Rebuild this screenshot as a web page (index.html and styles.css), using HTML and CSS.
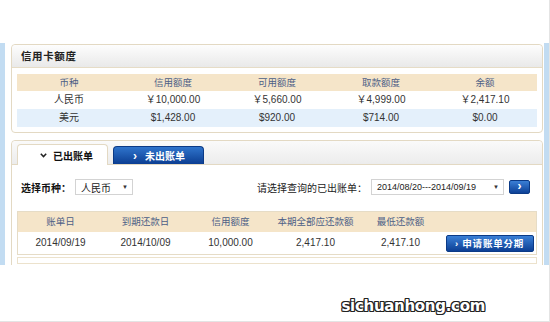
FILE: index.html
```html
<!DOCTYPE html>
<html>
<head>
<meta charset="utf-8">
<link rel="stylesheet" href="styles.css">
</head>
<body>
<div class="page">
  <div class="frame">
    <div class="card card-limit">
      <div class="card-title">信用卡额度</div>
      <div class="card-body">
        <div class="grid5 head">
          <div>币种</div><div>信用额度</div><div>可用额度</div><div>取款额度</div><div>余额</div>
        </div>
        <div class="grid5 row">
          <div>人民币</div><div>￥10,000.00</div><div>￥5,660.00</div><div>￥4,999.00</div><div>￥2,417.10</div>
        </div>
        <div class="grid5 row alt">
          <div>美元</div><div>$1,428.00</div><div>$920.00</div><div>$714.00</div><div>$0.00</div>
        </div>
      </div>
    </div>

    <div class="card card-bill">
      <div class="tabs">
        <div class="tab active"><span class="chev-down"><svg width="7" height="5" viewBox="0 0 7 5"><path d="M0.8 0.8 L3.5 3.6 L6.2 0.8" fill="none" stroke="#222" stroke-width="1.5"/></svg></span>已出账单</div>
        <div class="tab inactive"><span class="chev-right">›</span>未出账单</div>
      </div>
      <div class="bill-body">
        <div class="form-row">
          <div class="left-form">
            <span class="lbl">选择币种：</span>
            <div class="select sel-cur"><span>人民币</span><span class="arrow">▼</span></div>
          </div>
          <div class="right-form">
            <span class="lbl2">请选择查询的已出账单：</span>
            <div class="select sel-date"><span>2014/08/20---2014/09/19</span><span class="arrow">▼</span></div>
            <div class="go">›</div>
          </div>
        </div>
        <div class="bill-table">
          <div class="grid6 bhead">
            <div>账单日</div><div>到期还款日</div><div>信用额度</div><div>本期全部应还款额</div><div>最低还款额</div><div></div>
          </div>
          <div class="grid6 brow">
            <div>2014/09/19</div><div>2014/10/09</div><div>10,000.00</div><div>2,417.10</div><div>2,417.10</div>
            <div><span class="apply">› 申请账单分期</span></div>
          </div>
        </div>
        <div class="next-box"></div>
      </div>
    </div>
  </div>
  <div class="watermark">sichuanhong.com</div>
</div>
</body>
</html>
```

FILE: styles.css
```css
html, body {
  margin: 0;
  padding: 0;
  background: #fff;
}
.page {
  width: 550px;
  height: 322px;
  box-sizing: border-box;
  border-right: 1px solid #e4e4e4;
  border-bottom: 1px solid #e4e4e4;
  overflow: hidden;
  font-family: "Liberation Sans", "Noto Sans CJK SC", sans-serif;
  font-size: 10px;
  color: #333;
}
.frame {
  margin-top: 43px;
  height: 222px;
  box-sizing: border-box;
  border-left: 5px solid #c2dcf2;
  border-right: 5px solid #c2dcf2;
  padding: 1px 1px 0 6px;
  overflow: hidden;
}
.card {
  width: 532px;
  box-sizing: border-box;
  border: 1px solid #e3d9c3;
  border-radius: 4px;
  background: #fff;
}
.card-title {
  height: 22px;
  line-height: 22px;
  padding-left: 9px;
  font-weight: bold;
  font-size: 10.5px;
  letter-spacing: 0.6px;
  color: #222;
  background: linear-gradient(#fdfdfd, #e9e9e9);
  border-bottom: 1px solid #e6dcc6;
  border-radius: 4px 4px 0 0;
}
.card-body {
  padding: 6px 5px 5px 5px;
}
.grid5 {
  display: grid;
  grid-template-columns: repeat(5, 1fr);
  text-align: center;
}
.head {
  height: 17px;
  line-height: 17px;
  background: #f5e5c9;
  color: #4d5f86;
  font-size: 9.5px;
}
.row {
  height: 18px;
  line-height: 18px;
  color: #333;
}
.row.alt {
  background: #e4f0fb;
}
.card-bill {
  margin-top: 7px;
  height: 200px;
}
.tabs {
  height: 23px;
  background: linear-gradient(#fafafa, #ececec);
  border-bottom: 1px solid #e3d9c3;
  border-radius: 4px 4px 0 0;
  padding: 3px 0 0 5px;
  box-sizing: content-box;
  display: flex;
  align-items: flex-end;
  gap: 5px;
  height: 20px;
}
.tab {
  box-sizing: border-box;
  width: 91px;
  display: flex;
  align-items: center;
  font-weight: bold;
  font-size: 10px;
  border-radius: 4px 4px 0 0;
}
.tab.active {
  height: 21px;
  margin-bottom: -1px;
  background: #fff;
  border: 1px solid #e3d9c3;
  border-bottom: none;
  padding-left: 22px;
  color: #111;
}
.chev-down {
  display: inline-flex;
  margin-right: 6px;
}
.tab.inactive {
  height: 18px;
  background: linear-gradient(#2f74cc, #0c3e92);
  border: 1px solid #0b3a86;
  border-bottom: none;
  color: #fff;
  padding-left: 19px;
}
.chev-right {
  font-size: 12px;
  margin-right: 8px;
  line-height: 1;
}
.bill-body {
  padding: 14px 5px 0 5px;
}
.form-row {
  height: 16px;
  display: flex;
  justify-content: space-between;
  align-items: center;
}
.left-form, .right-form {
  display: flex;
  align-items: center;
}
.left-form {
  padding-left: 4px;
}
.lbl {
  font-weight: bold;
  color: #111;
  margin-right: 4px;
}
.lbl2 {
  color: #222;
  margin-right: 4px;
}
.select {
  box-sizing: border-box;
  height: 16px;
  border: 1px solid #d3d3d3;
  background: #fff;
  display: flex;
  align-items: center;
  justify-content: space-between;
  padding: 0 4px 0 5px;
  color: #222;
}
.sel-cur {
  width: 58px;
}
.sel-date {
  width: 133px;
  font-size: 9px;
}
.arrow {
  font-size: 6px;
  color: #333;
}
.go {
  margin-left: 5px;
  margin-right: 7px;
  width: 21px;
  height: 14px;
  box-sizing: border-box;
  border: 1px solid #0b3a86;
  border-radius: 2px;
  background: linear-gradient(#3a7fd6, #0d4197);
  color: #fff;
  font-weight: bold;
  font-size: 12px;
  line-height: 11px;
  text-align: center;
}
.bill-table {
  margin-top: 16px;
  border: 1px solid #e6dcc6;
}
.grid6 {
  display: grid;
  grid-template-columns: 85px 85px 85px 85px 85px 1fr;
  text-align: center;
}
.bhead {
  height: 20px;
  line-height: 20px;
  background: #f5e5c9;
  color: #4d5f86;
  font-size: 9.5px;
}
.brow {
  height: 22px;
  line-height: 22px;
  color: #333;
}
.brow > div {
  display: flex;
  align-items: center;
  justify-content: center;
}
.apply {
  display: inline-block;
  width: 88px;
  height: 17px;
  line-height: 16px;
  box-sizing: border-box;
  border: 1px solid #0b3a86;
  border-radius: 2px;
  background: linear-gradient(#3a7fd6, #0c3f94);
  color: #fff;
  font-weight: bold;
  font-size: 9.5px;
  letter-spacing: 0.8px;
}
.next-box {
  margin-top: 2px;
  height: 5px;
  border-top: 1px solid #ece2cc;
  border-bottom: 1px solid #ece2cc;
  border-left: 1px solid #ece2cc;
  border-right: 1px solid #ece2cc;
}
.watermark {
  margin-top: 32px;
  text-align: right;
  padding-right: 64px;
  font-family: "DejaVu Sans", sans-serif;
  font-weight: bold;
  font-size: 15px;
  line-height: 18px;
  color: #fff;
  letter-spacing: -0.3px;
  text-shadow: 1px 0 0 #222, -1px 0 0 #222, 0 1px 0 #222, 0 -1px 0 #222,
    1px 1px 0 #222, -1px -1px 0 #222, 1px -1px 0 #222, -1px 1px 0 #222;
}
```
